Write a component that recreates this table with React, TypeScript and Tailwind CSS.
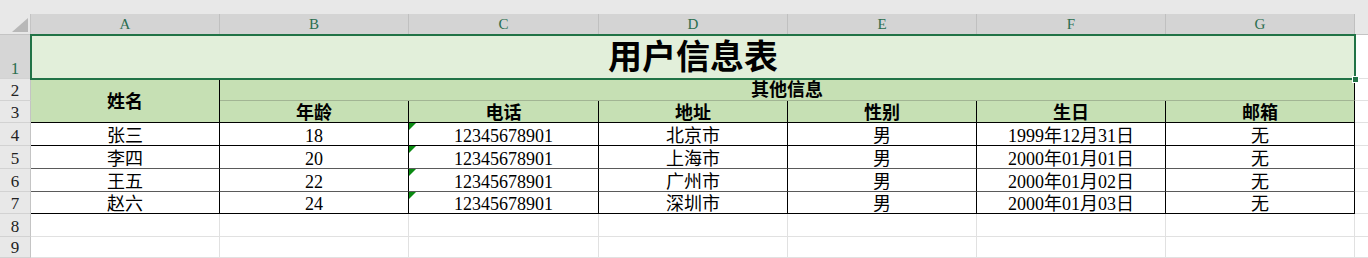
import React from 'react';

const FONT = { fontFamily: '"Liberation Serif", "Noto Sans CJK SC", serif' };

const cols = ['A', 'B', 'C', 'D', 'E', 'F', 'G'];
const heads = ['年龄', '电话', '地址', '性别', '生日', '邮箱'];
const rows = [
  ['张三', '18', '12345678901', '北京市', '男', '1999年12月31日', '无'],
  ['李四', '20', '12345678901', '上海市', '男', '2000年01月01日', '无'],
  ['王五', '22', '12345678901', '广州市', '男', '2000年01月02日', '无'],
  ['赵六', '24', '12345678901', '深圳市', '男', '2000年01月03日', '无'],
];

function RowHead({ n, selected }: { n: number; selected?: boolean }) {
  return (
    <div
      className={
        'flex items-end justify-center pb-[1px] border-r border-b border-r-[#c4c4c4] border-b-[#d2d2d2] text-[17px] leading-none ' +
        (selected ? 'bg-[#d6d6d6] text-[#2b6e4f]' : 'bg-[#e8e8e8] text-[#222]')
      }
    >
      {n}
    </div>
  );
}

function Filler({ last }: { last?: boolean }) {
  return <div className={'bg-white ' + (last ? '' : 'border-b border-[#e1e1e1]')} />;
}

export default function App() {
  return (
    <div className="w-[1368px] h-[258px] overflow-hidden bg-white" style={FONT}>
      {/* 上部バー */}
      <div className="h-[14px] bg-[#e8e8e8]" />

      <div className="grid grid-cols-[31px_189px_189px_190px_189px_189px_189px_189px_1fr] grid-rows-[21px_44px_22px_22px_23px_23px_23px_22px_23px_1fr] h-[244px]">
        {/* 列見出し */}
        <div className="relative bg-[#e8e8e8] border-r border-b border-[#c4c4c4]">
          <div className="absolute right-[2px] bottom-[2px] w-0 h-0 border-l-[16px] border-l-transparent border-b-[14px] border-b-[#b8b8b8]" />
        </div>
        {cols.map((c) => (
          <div
            key={c}
            className="flex items-end justify-center pb-[2px] bg-[#d4d4d4] border-r border-b border-r-[#c0c0c0] border-b-[#bcbcbc] text-[15px] leading-none text-[#2b6e4f]"
          >
            {c}
          </div>
        ))}
        <div className="bg-[#e8e8e8] border-b border-[#c4c4c4]" />

        {/* 1行目: タイトル */}
        <RowHead n={1} selected />
        <div className="col-span-7 relative flex items-center justify-center bg-[#e2efda] text-[34px] font-bold leading-none text-black pt-[1px]">
          用户信息表
          <div className="absolute -left-[1px] -top-[1px] -right-[1px] -bottom-[1px] border-2 border-[#217346]" />
          <div className="absolute -right-[4px] -bottom-[4px] w-[7px] h-[7px] bg-[#217346] border border-white" />
        </div>
        <Filler />

        {/* 2行目 */}
        <RowHead n={2} />
        <div className="row-span-2 flex items-center justify-center bg-[#c6e0b4] border-r border-b border-black text-[18px] font-bold leading-none text-black pt-[2px]">
          姓名
        </div>
        <div className="col-span-6 flex items-center justify-center bg-[#c6e0b4] border-r border-r-black border-b border-b-[#a2b594] text-[18px] font-bold leading-none text-black pt-[1px]">
          其他信息
        </div>
        <Filler />

        {/* 3行目 */}
        <RowHead n={3} />
        {heads.map((h) => (
          <div
            key={h}
            className="flex items-center justify-center bg-[#c6e0b4] border-r border-b border-black text-[18px] font-bold leading-none text-black pt-[2px]"
          >
            {h}
          </div>
        ))}
        <Filler />

        {/* データ行 */}
        {rows.map((r, i) => (
          <React.Fragment key={i}>
            <RowHead n={i + 4} />
            {r.map((v, j) => (
              <div
                key={j}
                className={
                  'relative flex items-center justify-center bg-white border-r border-r-black border-b text-[18px] leading-none text-black pt-[3px] ' +
                  (i === 0 || i === 3 ? 'border-b-black' : 'border-b-[#5a5a5a]')
                }
              >
                {j === 2 && (
                  <div className="absolute left-0 top-0 w-0 h-0 border-t-[7px] border-t-[#0a8a12] border-r-[7px] border-r-transparent" />
                )}
                {v}
              </div>
            ))}
            <Filler />
          </React.Fragment>
        ))}

        {/* 8, 9行目 */}
        {[8, 9].map((n) => (
          <React.Fragment key={n}>
            <RowHead n={n} />
            {cols.map((c) => (
              <div key={c} className="bg-white border-r border-b border-[#e1e1e1]" />
            ))}
            <Filler />
          </React.Fragment>
        ))}
      </div>
    </div>
  );
}
